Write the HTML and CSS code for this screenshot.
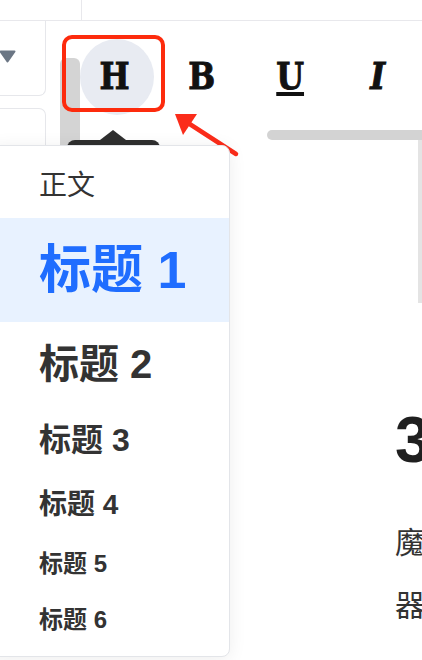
FILE: index.html
```html
<!DOCTYPE html>
<html lang="zh">
<head>
<meta charset="utf-8">
<title>标题</title>
<link rel="stylesheet" href="styles.css">
</head>
<body>
<div class="app">
  <div class="topbar"><div class="topbar-cell"></div></div>
  <div class="main">
    <aside class="side">
      <div class="select select-a">
        <svg class="caret-down" width="18" height="13" viewBox="0 0 18 13"><path d="M1.5 1.5 H15.5 L8.5 11.5 Z" fill="#6b7684" stroke="#6b7684" stroke-width="2" stroke-linejoin="round"/></svg>
      </div>
      <div class="select select-b"></div>
    </aside>
    <div class="track"></div>
    <section class="editor">
      <div class="toolbar">
        <button class="tool tool-active"><span class="glyph">H</span></button>
        <button class="tool"><span class="glyph">B</span></button>
        <button class="tool"><span class="glyph glyph-u">U</span></button>
        <button class="tool"><span class="glyph glyph-i">I</span></button>
      </div>
      <div class="ruler"></div>
      <div class="frame"></div>
      <article class="doc">
        <h1 class="doc-title">3 标题样式</h1>
        <p class="doc-text"><span class="doc-line">魔方富文本编辑</span><span class="doc-line">器支持多级标题</span></p>
      </article>
    </section>
  </div>

  <div class="annot-box"></div>
  <svg class="annot-arrow" width="72" height="52" viewBox="0 0 72 52">
    <line x1="15" y1="13" x2="66" y2="46" stroke="#fb2c1a" stroke-width="4.5" stroke-linecap="round"/>
    <polygon points="5,6 27,6 13,27" fill="#fb2c1a"/>
  </svg>

  <div class="tooltip"></div>

  <div class="menu">
    <div class="menu-item item-p">正文</div>
    <div class="menu-item item-h1 is-active">标题 1</div>
    <div class="menu-item item-h2">标题 2</div>
    <div class="menu-item item-h3">标题 3</div>
    <div class="menu-item item-h4">标题 4</div>
    <div class="menu-item item-h5">标题 5</div>
    <div class="menu-item item-h6">标题 6</div>
  </div>
</div>
</body>
</html>
```

FILE: styles.css
```css
html, body {
  margin: 0;
  padding: 0;
  width: 422px;
  height: 660px;
  overflow: hidden;
  background: #ffffff;
}

.app {
  position: relative;
  width: 422px;
  height: 660px;
  overflow: hidden;
  font-family: "Liberation Sans", "Noto Sans CJK SC", sans-serif;
  color: #333333;
}

.topbar {
  height: 20px;
  border-bottom: 1px solid #e8e8ec;
}

.topbar-cell {
  width: 81px;
  height: 20px;
  border-right: 1px solid #e8e8ec;
}

.main {
  display: flex;
  align-items: flex-start;
}

.side {
  width: 46px;
  flex: none;
}

.select {
  box-sizing: border-box;
  border: 1px solid #e6e7eb;
  border-left: none;
}

.select-a {
  height: 75px;
  border-top: none;
  border-radius: 0 0 7px 0;
  padding-top: 29px;
}

.caret-down {
  display: block;
  margin-left: -1px;
}

.select-b {
  margin-top: 12px;
  height: 120px;
  border-bottom: none;
  border-radius: 0 7px 0 0;
}

.track {
  flex: none;
  width: 20px;
  height: 200px;
  margin-left: 14px;
  margin-top: 37px;
  background: #d4d4d4;
  border-radius: 6px 6px 0 0;
}

.editor {
  flex: none;
  width: 342px;
}

.toolbar {
  display: flex;
  gap: 20px;
  padding-top: 19px;
}

.tool {
  position: relative;
  width: 68px;
  height: 72px;
  padding: 0;
  margin: 0;
  border: none;
  background: transparent;
  display: flex;
  align-items: center;
  justify-content: center;
}

.tool-active::before {
  content: "";
  position: absolute;
  left: 0;
  top: -1px;
  width: 74px;
  height: 76px;
  border-radius: 50%;
  background: #e8ebf2;
}

.glyph {
  position: relative;
  display: inline-block;
  font-family: "DejaVu Serif", "Liberation Serif", serif;
  font-weight: 700;
  font-size: 37px;
  line-height: 1;
  color: #111111;
  -webkit-text-stroke: 1px #111111;
  transform: scaleX(0.86);
}

.glyph-u {
  text-decoration: underline;
  text-decoration-thickness: 4px;
  text-underline-offset: 3px;
}

.glyph-i {
  font-style: italic;
}

.ruler {
  margin-top: 18px;
  margin-left: 187px;
  height: 10px;
  background: #d3d3d3;
  border-radius: 5px 0 0 5px;
}

.frame {
  box-sizing: border-box;
  height: 163px;
  border-right: 4px solid #e4e4e4;
}

.doc {
  padding-left: 315px;
  white-space: nowrap;
}

.doc-title {
  margin: 99px 0 0;
  font-size: 64px;
  line-height: 77px;
  font-weight: 700;
  color: #1f1f1f;
}

.doc-text {
  margin: 32px 0 0;
  font-size: 30px;
  line-height: 63px;
  color: #333333;
}

.doc-line {
  display: block;
}

.annot-box {
  position: absolute;
  left: 62px;
  top: 35px;
  width: 103px;
  height: 77px;
  box-sizing: border-box;
  border: 4px solid #fd2b0d;
  border-radius: 10px;
}

.annot-arrow {
  position: absolute;
  left: 170px;
  top: 108px;
}

.tooltip {
  position: absolute;
  left: 67px;
  top: 140px;
  width: 93px;
  height: 30px;
  background: #2f2f2f;
  border-radius: 8px;
}

.tooltip::before {
  content: "";
  position: absolute;
  left: 33px;
  top: -10px;
  width: 0;
  height: 0;
  border-left: 13px solid transparent;
  border-right: 13px solid transparent;
  border-bottom: 10px solid #2f2f2f;
}

.menu {
  position: absolute;
  left: -10px;
  top: 145px;
  width: 240px;
  box-sizing: border-box;
  padding: 8px 0 8px;
  background: #ffffff;
  border: 1px solid #e3e5e9;
  border-radius: 8px;
  box-shadow: 0 2px 18px rgba(0, 0, 0, 0.07);
}

.menu-item {
  padding-left: 48px;
  font-weight: 700;
  color: #333333;
  white-space: nowrap;
}

.item-p {
  height: 64px;
  line-height: 64px;
  font-size: 28px;
  font-weight: 400;
}

.item-h1 {
  height: 104px;
  line-height: 104px;
  font-size: 52px;
}

.is-active {
  background: #e8f2ff;
  color: #1f6dff;
}

.item-h2 {
  height: 84px;
  line-height: 84px;
  font-size: 40px;
}

.item-h3 {
  height: 68px;
  line-height: 68px;
  font-size: 32px;
}

.item-h4 {
  height: 62px;
  line-height: 62px;
  font-size: 28px;
}

.item-h5 {
  height: 56px;
  line-height: 56px;
  font-size: 24px;
}

.item-h6 {
  height: 56px;
  line-height: 56px;
  font-size: 24px;
}
```
